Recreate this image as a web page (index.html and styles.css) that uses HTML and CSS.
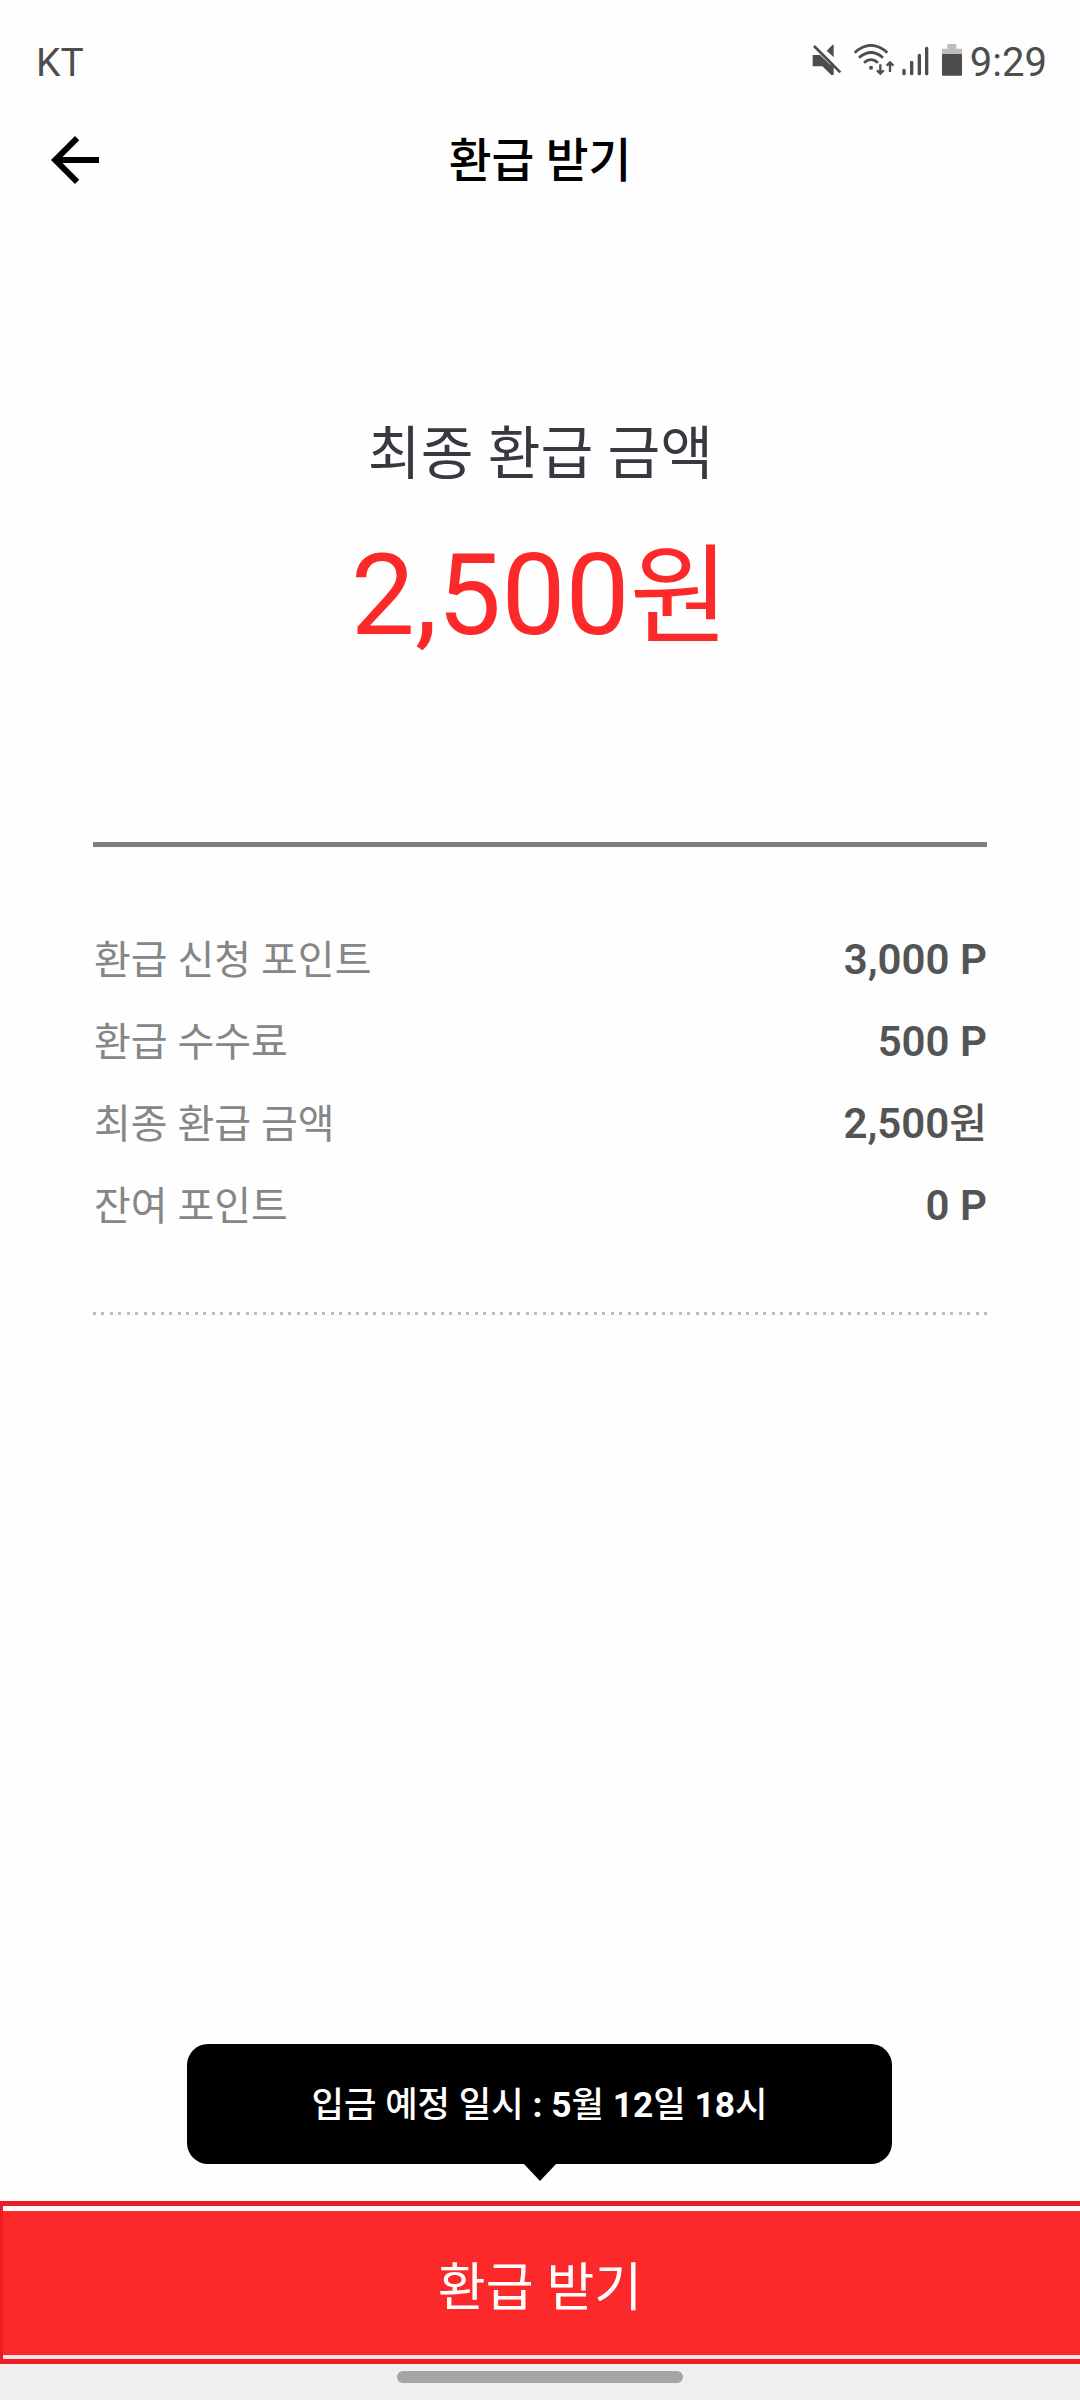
FILE: index.html
```html
<!DOCTYPE html>
<html lang="ko">

<head>
     <meta charset="UTF-8">
     <meta name="viewport" content="width=device-width, initial-scale=1.0">
     <title>환급 받기</title>
     <link rel="stylesheet" href="styles.css">
</head>

<body>
     <div class="status">
          <span class="carrier">KT</span>
          <div class="status-icons">
               <svg class="mute" viewBox="66 42 90 96" width="30" height="32">
                    <path d="M68 75h22l41 39v21h-7L97 109H68zM110 62l18-18h3v38zM105 77l26 26v15z" />
                    <path d="M72 48l79 79" class="line" stroke-width="8" />
               </svg>
               <svg class="wifi" viewBox="189 42 126 96" width="42" height="32">
                    <path class="line" stroke-width="8" d="M194 68Q243 24 292 68M207 83Q243 52 279 83M222 98Q243 80 264 98" />
                    <circle cx="243" cy="113" r="6" />
                    <path class="line" stroke-width="7" d="M271 103v27M261 121l10 10 10-10M300 126V98M290 107l10-10 10 10" />
               </svg>
               <svg class="signal" viewBox="336 42 81 96" width="27" height="32">
                    <path class="line" stroke-width="10" stroke-linecap="round" d="M342 121v10M365 97v34M388 76v55M410 55v76" />
               </svg>
               <svg class="battery" viewBox="453 42 63 96" width="21" height="32">
                    <path class="empty" d="M472 42h27v14h17v17h-60V56h16z" />
                    <path d="M456 72h60v62q0 3-3 3h-54q-3 0-3-3z" />
               </svg>
               <span class="time">9:29</span>
          </div>
     </div>

     <header>
          <a class="back" href="#" aria-label="뒤로">
               <svg viewBox="0 0 24 24" width="72" height="72">
                    <path d="M20 11H7.83l5.59-5.59L12 4l-8 8 8 8 1.41-1.41L7.83 13H20v-2z" />
               </svg>
          </a>
          <h1>환급 받기</h1>
     </header>

     <main>
          <section class="total">
               <h2>최종 환급 금액</h2>
               <p>2,500<span class="won">원</span></p>
          </section>
          <dl class="details">
               <div>
                    <dt>환급 신청 포인트</dt>
                    <dd>3,000 P</dd>
               </div>
               <div>
                    <dt>환급 수수료</dt>
                    <dd>500 P</dd>
               </div>
               <div>
                    <dt>최종 환급 금액</dt>
                    <dd>2,500<span class="won">원</span></dd>
               </div>
               <div>
                    <dt>잔여 포인트</dt>
                    <dd>0 P</dd>
               </div>
          </dl>
     </main>

     <footer>
          <p class="tooltip">입금 예정 일시 <b>:</b> <b>5</b>월 <b>12</b>일 <b>18</b>시</p>
          <div class="action">
               <button type="button">환급 받기</button>
          </div>
          <div class="navbar"><span></span></div>
     </footer>
</body>

</html>
```
FILE: styles.css
```css
:root {
     --FONT-FAMILY: Roboto, 'Noto Sans CJK KR', sans-serif;
     --PAGE-color: #fefefe;
     --RED-color: #fb292a;
     --OUTLINE-color: #ed1c24;
     --STATUS-color: #4d4d4d;
}

/** Généralités **/
* {
     margin: 0;
     padding: 0;
     box-sizing: border-box;
}

body {
     display: flex;
     flex-direction: column;
     height: 2400px;
     background: var(--PAGE-color);
     font-family: var(--FONT-FAMILY);
}

svg {
     display: block;
}

/** status bar **/
.status {
     display: flex;
     justify-content: space-between;
     align-items: center;
     height: 124px;
     padding: 1px 33px 0 36px;
     color: var(--STATUS-color);
     font-size: 39px;
}

.status-icons {
     display: flex;
     align-items: center;
}

.status-icons svg {
     margin-bottom: 5px;
     fill: var(--STATUS-color);
}

.status-icons .line {
     fill: none;
     stroke: var(--STATUS-color);
}

.status-icons .empty {
     fill: #bdbdbd;
}

.mute {
     margin-right: 11px;
}

.wifi {
     margin-right: 7px;
}

.signal {
     margin-right: 12px;
}

.battery {
     margin-right: 8px;
}

.time {
     font-size: 40px;
}

/** header **/
header {
     display: grid;
     grid-template-columns: 72px 1fr 72px;
     align-items: start;
     height: 72px;
     padding: 0 39px;
}

h1 {
     font-size: 46.5px;
     font-weight: 500;
     line-height: 74px;
     text-align: center;
}

/** content **/
main {
     flex: 1;
     padding: 219px 93px 0;
}

.total {
     height: 432px;
     border-bottom: 5px solid #7e7e7e;
     text-align: center;
}

h2 {
     margin-bottom: 40px;
     padding-left: 1px;
     color: #373940;
     font-size: 57.4px;
     font-weight: 400;
     line-height: 80px;
}

.total p {
     color: var(--RED-color);
     font-size: 114px;
     line-height: 120px;
}

.won {
     font-size: .95em;
     line-height: 1;
}

.details {
     padding: 72px 0 68px;
     background: repeating-linear-gradient(90deg, #bdbdbd 0 3px, transparent 3px 8.486px) bottom / 100% 3px no-repeat;
}

.details div {
     display: flex;
     justify-content: space-between;
     height: 82px;
     line-height: 82px;
}

dt {
     padding: 1px 0 0 1px;
     color: #868686;
     font-size: 40px;
}

dd {
     color: #545454;
     font-size: 42px;
     font-weight: 600;
}

dd .won {
     font-size: 41px;
     font-weight: 500;
}

/** bottom **/
.tooltip {
     position: relative;
     width: 705px;
     height: 120px;
     margin: 0 auto 37px 187px;
     border-radius: 21px;
     background: #000;
     color: #fff;
     font-size: 35.3px;
     font-weight: 500;
     line-height: 123px;
     text-align: center;
}

.tooltip::after {
     content: "";
     position: absolute;
     top: 100%;
     left: 337px;
     border: 16px solid transparent;
     border-top: 17px solid #000;
     border-bottom: 0;
}

.action {
     height: 163px;
     padding: 5px 0 4px;
     border: solid var(--OUTLINE-color);
     border-width: 5px 0 5px 3px;
     background: linear-gradient(#fff 50%, #fbe0e4 50%);
}

.action button {
     display: block;
     width: 100%;
     height: 144px;
     padding-right: 3px;
     border: 0;
     background: var(--RED-color);
     color: #fff;
     font-family: inherit;
     font-size: 52px;
}

.navbar {
     height: 36px;
     padding-top: 7px;
     background: #efefef;
}

.navbar span {
     display: block;
     width: 286px;
     height: 12px;
     margin: 0 auto;
     border-radius: 6px;
     background: #a5a5a5;
}
```
